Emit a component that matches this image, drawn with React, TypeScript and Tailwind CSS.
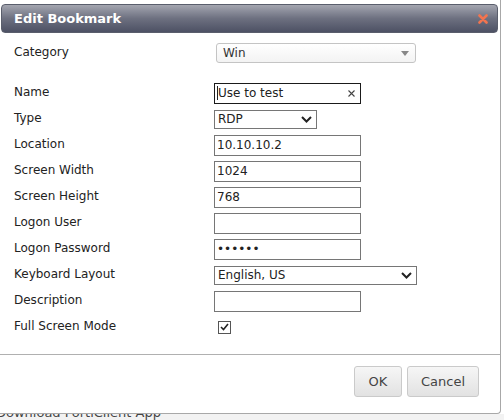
import React from 'react';

const font = { fontFamily: '"DejaVu Sans", Verdana, sans-serif' };

const Label: React.FC<{ text: string }> = ({ text }) => (
  <div className="w-[213px] shrink-0 pl-[13px] -mt-[3px] text-[12px] text-[#222]">{text}</div>
);

const TextBox: React.FC<{ value?: string; type?: string }> = ({ value = '', type = 'text' }) => (
  <input
    readOnly
    type={type}
    defaultValue={value}
    className="w-[147px] h-[21px] border border-[#767676] bg-white px-[2px] text-[12px] text-[#222] outline-none"
    style={font}
  />
);

const Chevron: React.FC = () => (
  <svg width="11" height="7" viewBox="0 0 11 7" className="shrink-0">
    <polyline points="1,1 5.5,5.5 10,1" fill="none" stroke="#222" strokeWidth="2" />
  </svg>
);

const NativeSelect: React.FC<{ value: string; width: string }> = ({ value, width }) => (
  <div className={`${width} h-[19px] border border-[#767676] bg-white flex items-center justify-between pl-[3px] pr-[4px] text-[12px] text-[#222]`}>
    <span>{value}</span>
    <Chevron />
  </div>
);

const Row: React.FC<{ label: string; children: React.ReactNode }> = ({ label, children }) => (
  <div className="flex items-center h-[26px]">
    <Label text={label} />
    {children}
  </div>
);

const App: React.FC = () => {
  return (
    <div className="w-[504px] h-[420px] overflow-hidden bg-white" style={font}>
      {/* Dialog */}
      <div className="w-[501px] h-[414px] border-r border-b border-[#a8a8a8] rounded-br-[4px] bg-white pt-[4px] pl-[1px] pr-[2px] flex flex-col">
        {/* Title bar */}
        <div className="h-[29px] rounded-[4px] border border-[#5a5e6c] bg-gradient-to-b from-[#a4a6b0] via-[#6d7080] to-[#4d5164] flex items-center justify-between pl-[12px] pr-[9px]">
          <span className="text-white font-bold text-[13px]">Edit Bookmark</span>
          <svg width="10" height="10" viewBox="0 0 10 10">
            <path d="M1.5 1.5 L8.5 8.5 M8.5 1.5 L1.5 8.5" stroke="#f2744f" strokeWidth="2.6" strokeLinecap="round" />
          </svg>
        </div>

        {/* Form body */}
        <div className="pt-[7px] pb-[14px]">
          <div className="flex items-center h-[26px]">
            <Label text="Category" />
            <div className="ml-[2px] w-[200px] h-[20px] rounded-[3px] border border-[#c4c4c4] bg-gradient-to-b from-white to-[#f3f3f3] flex items-center justify-between pl-[6px] pr-[6px] text-[12px] text-[#333]">
              <span>Win</span>
              <svg width="8" height="5" viewBox="0 0 8 5">
                <polygon points="0,0 8,0 4,5" fill="#888" />
              </svg>
            </div>
          </div>

          <div className="h-[14px]" />

          <Row label="Name">
            <div className="w-[147px] h-[21px] border border-[#1a1a1a] bg-white flex items-center justify-between pl-[2px] pr-[5px] text-[12px] text-[#222]">
              <span className="flex items-center">
                <span className="w-px h-[14px] bg-[#222]" />
                <span>Use to test</span>
              </span>
              <svg width="7" height="7" viewBox="0 0 7 7">
                <path d="M0.5 0.5 L6.5 6.5 M6.5 0.5 L0.5 6.5" stroke="#444" strokeWidth="1.1" />
              </svg>
            </div>
          </Row>
          <Row label="Type">
            <NativeSelect value="RDP" width="w-[103px]" />
          </Row>
          <Row label="Location">
            <TextBox value="10.10.10.2" />
          </Row>
          <Row label="Screen Width">
            <TextBox value="1024" />
          </Row>
          <Row label="Screen Height">
            <TextBox value="768" />
          </Row>
          <Row label="Logon User">
            <TextBox />
          </Row>
          <Row label="Logon Password">
            <TextBox value="secret" type="password" />
          </Row>
          <Row label="Keyboard Layout">
            <NativeSelect value="English, US" width="w-[203px]" />
          </Row>
          <Row label="Description">
            <TextBox />
          </Row>
          <Row label="Full Screen Mode">
            <span className="ml-[4px] w-[13px] h-[13px] border border-[#555] bg-white flex items-center justify-center">
              <svg width="9" height="8" viewBox="0 0 9 8">
                <polyline points="1,4 3.5,6.5 8,1" fill="none" stroke="#222" strokeWidth="1.6" />
              </svg>
            </span>
          </Row>
        </div>

        {/* Footer */}
        <div className="border-t border-[#b0b0b0] -mr-[2px] -ml-[1px] flex justify-end gap-[5px] pt-[11px] pr-[21px]">
          <button className="w-[48px] h-[31px] rounded-[3px] border border-[#cacaca] bg-gradient-to-b from-[#f6f6f6] to-[#e2e2e2] text-[13px] text-[#444]">
            OK
          </button>
          <button className="w-[72px] h-[31px] rounded-[3px] border border-[#cacaca] bg-gradient-to-b from-[#f6f6f6] to-[#e2e2e2] text-[13px] text-[#444]">
            Cancel
          </button>
        </div>
      </div>

      {/* Page content behind the dialog */}
      <div className="h-[6px] overflow-hidden bg-[#f2f2f2]">
        <div className="-mt-[9px] -ml-[4px] text-[13px] text-[#444] leading-[16px]">Download FortiClient App</div>
      </div>
    </div>
  );
};

export default App;
